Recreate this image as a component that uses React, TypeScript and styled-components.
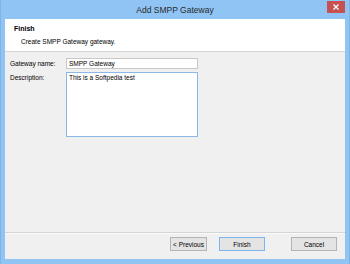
import React from 'react';
import styled, { createGlobalStyle } from 'styled-components';

const Global = createGlobalStyle`
  html, body {
    margin: 0;
    padding: 0;
    background: #8fc4f4;
  }
  * {
    box-sizing: border-box;
  }
`;

const Window = styled.div`
  width: 350px;
  height: 264px;
  display: flex;
  flex-direction: column;
  background: #8fc4f4;
  border-left: 1px solid #7fb4e6;
  border-right: 1px solid #7fb4e6;
  font-family: 'Liberation Sans', Arial, sans-serif;
`;

const TitleBar = styled.div`
  position: relative;
  height: 19px;
  flex: none;
  display: flex;
  align-items: center;
  justify-content: center;
`;

const Title = styled.div`
  font-size: 8.5px;
  color: #2a2a2a;
  padding-top: 1px;
`;

const CloseButton = styled.div`
  position: absolute;
  top: 1px;
  right: 4px;
  width: 18px;
  height: 12px;
  background: #c75050;
  display: flex;
  align-items: center;
  justify-content: center;
`;

const Client = styled.div`
  flex: 1;
  margin: 0 4px 5px 4px;
  display: flex;
  flex-direction: column;
  background: #f0f0f0;
`;

const Header = styled.div`
  height: 33px;
  flex: none;
  background: #ffffff;
  border-bottom: 1px solid #d5d5d5;
  padding: 4px 0 0 9px;
`;

const HeaderTitle = styled.div`
  font-size: 7px;
  font-weight: bold;
  color: #000;
  line-height: 11px;
`;

const HeaderText = styled.div`
  font-size: 6.5px;
  color: #000;
  line-height: 11px;
  margin: 2px 0 0 7px;
`;

const Form = styled.div`
  flex: 1;
  padding: 6px 0 0 5px;
  display: grid;
  grid-template-columns: 56px 132px;
  grid-auto-rows: min-content;
  row-gap: 3px;
  align-content: start;
`;

const Label = styled.div`
  font-size: 6.5px;
  color: #000;
  line-height: 11px;
`;

const TextBox = styled.div<{ $tall?: boolean; $focused?: boolean }>`
  height: ${p => (p.$tall ? '65px' : '11px')};
  background: #ffffff;
  border: 1px solid ${p => (p.$focused ? '#8ab9e8' : '#c8c8c8')};
  font-size: 6.5px;
  color: #000;
  line-height: 9px;
  padding: 0 2px;
`;

const Footer = styled.div`
  height: 27px;
  flex: none;
  border-top: 1px solid #d5d5d5;
  box-shadow: inset 0 1px 0 #fafafa;
  display: flex;
  align-items: flex-start;
  padding: 4px 8px 0 0;
  justify-content: flex-end;
`;

const Button = styled.div<{ $width: number; $gap: number; $default?: boolean }>`
  width: ${p => p.$width}px;
  height: 14px;
  margin-left: ${p => p.$gap}px;
  background: #e4e4e4;
  border: 1px solid ${p => (p.$default ? '#7db5ec' : '#b4b4b4')};
  display: flex;
  align-items: center;
  justify-content: center;
  font-size: 6.5px;
  color: #000;
`;

export default function App() {
  return (
    <>
      <Global />
      <Window>
        <TitleBar>
          <Title>Add SMPP Gateway</Title>
          <CloseButton>
            <svg width="6" height="6" viewBox="0 0 6 6">
              <path d="M0.5 0.5 L5.5 5.5 M5.5 0.5 L0.5 5.5" stroke="#fff" strokeWidth="1.3" />
            </svg>
          </CloseButton>
        </TitleBar>
        <Client>
          <Header>
            <HeaderTitle>Finish</HeaderTitle>
            <HeaderText>Create SMPP Gateway gateway.</HeaderText>
          </Header>
          <Form>
            <Label>Gateway name:</Label>
            <TextBox>SMPP Gateway</TextBox>
            <Label>Description:</Label>
            <TextBox $tall $focused>This is a Softpedia test</TextBox>
          </Form>
          <Footer>
            <Button $width={37} $gap={0}>&lt; Previous</Button>
            <Button $width={46} $gap={12} $default>Finish</Button>
            <Button $width={46} $gap={26}>Cancel</Button>
          </Footer>
        </Client>
      </Window>
    </>
  );
}
